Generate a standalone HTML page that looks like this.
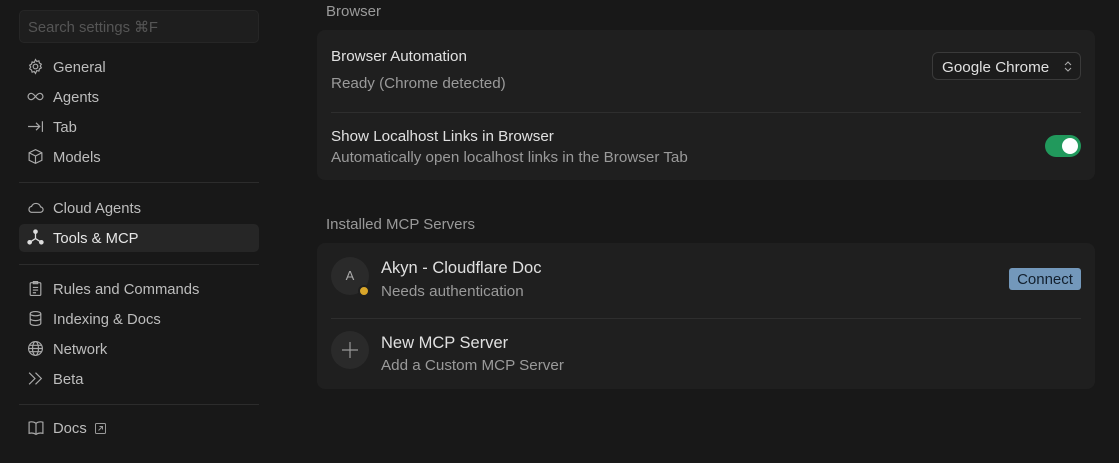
<!DOCTYPE html>
<html><head><style>
*{margin:0;padding:0;box-sizing:border-box}
body{width:1119px;height:463px;background:#181818;font-family:"Liberation Sans",sans-serif;font-size:14.8px;color:#d6d6d6;position:relative;overflow:hidden}
.a{position:absolute;white-space:nowrap}
.search{left:19px;top:10px;width:240px;height:33px;background:#1e1e1e;border:1px solid #262626;border-radius:5px;color:#555;padding:8px 8px;font-size:14.8px}
.it{left:19px;width:240px;height:28px;line-height:30px;padding-left:34px;color:#bdbdbd}
.it svg{position:absolute;left:8px;top:5px}
.sel{background:#262626;border-radius:5px;color:#e6e6e6}
.div{left:19px;width:240px;height:1px;background:#2c2c2c}
.card{left:317px;width:778px;background:#1f1f1f;border-radius:8px}
.h{color:#9a9a9a;font-size:15px}
.t{color:#e0e0e0;font-size:15.2px}
.s{color:#9a9a9a;font-size:15.2px}
</style></head><body>
<div class="a search">Search settings ⌘F</div>
<div class="a it" style="top:53px"><svg width="17" height="17" viewBox="0 0 16 16" fill="none" stroke="#aaa" stroke-width="1.1"><circle cx="8" cy="8" r="2.2"/><path d="M8 1.5l1.2 1.7 2-.5.5 2 1.8 1.1-1 1.7 1 1.7-1.8 1.1-.5 2-2-.5L8 14.5l-1.2-1.7-2 .5-.5-2-1.8-1.1 1-1.7-1-1.7 1.8-1.1.5-2 2 .5z"/></svg>General</div>
<div class="a it" style="top:83px"><svg width="17" height="17" viewBox="0 0 16 16" fill="none" stroke="#aaa" stroke-width="1.1"><path d="M8 8c-2-2.5-3-3-4.2-3S1 6.3 1 8s1.5 3 2.8 3S6 10.5 8 8s3-3 4.2-3S15 6.3 15 8s-1.5 3-2.8 3S10 10.5 8 8z"/></svg>Agents</div>
<div class="a it" style="top:113px"><svg width="17" height="17" viewBox="0 0 16 16" fill="none" stroke="#aaa" stroke-width="1.1"><path d="M1 8h11M8.5 4.5L12 8l-3.5 3.5M14.5 3v10"/></svg>Tab</div>
<div class="a it" style="top:143px"><svg width="17" height="17" viewBox="0 0 16 16" fill="none" stroke="#aaa" stroke-width="1.1"><path d="M8 1.5l6 3v7l-6 3-6-3v-7zM2 4.5l6 3 6-3M8 7.5v7"/></svg>Models</div>
<div class="a div" style="top:182px"></div>
<div class="a it" style="top:194px"><svg width="17" height="17" viewBox="0 0 16 16" fill="none" stroke="#aaa" stroke-width="1.1"><path d="M4 12.5h8.5a2.5 2.5 0 0 0 .3-5A4.5 4.5 0 0 0 4.3 7 2.8 2.8 0 0 0 4 12.5z"/></svg>Cloud Agents</div>
<div class="a it sel" style="top:224px"><svg width="17" height="17" viewBox="0 0 16 16" fill="#ddd" stroke="#ddd" stroke-width="1.2"><path d="M8 2v7M8 9l-5.5 3.5M8 9l5.5 3.5" fill="none"/><circle cx="8" cy="2.5" r="1.6"/><circle cx="2.5" cy="12.5" r="1.6"/><circle cx="13.5" cy="12.5" r="1.6"/></svg>Tools &amp; MCP</div>
<div class="a div" style="top:264px"></div>
<div class="a it" style="top:275px"><svg width="17" height="17" viewBox="0 0 16 16" fill="none" stroke="#aaa" stroke-width="1.1"><rect x="3" y="2.5" width="10" height="12" rx="1"/><path d="M6 1.5h4v2H6zM5.5 7h5M5.5 9.5h5M5.5 12h3"/></svg>Rules and Commands</div>
<div class="a it" style="top:305px"><svg width="17" height="17" viewBox="0 0 16 16" fill="none" stroke="#aaa" stroke-width="1.1"><ellipse cx="8" cy="3.5" rx="5" ry="2"/><path d="M3 3.5v9c0 1.1 2.2 2 5 2s5-.9 5-2v-9M3 8c0 1.1 2.2 2 5 2s5-.9 5-2"/></svg>Indexing &amp; Docs</div>
<div class="a it" style="top:335px"><svg width="17" height="17" viewBox="0 0 16 16" fill="none" stroke="#aaa" stroke-width="1.1"><circle cx="8" cy="8" r="6.5"/><ellipse cx="8" cy="8" rx="2.8" ry="6.5"/><path d="M1.5 8h13M2.5 5h11M2.5 11h11"/></svg>Network</div>
<div class="a it" style="top:365px"><svg width="17" height="17" viewBox="0 0 16 16" fill="none" stroke="#aaa" stroke-width="1.1"><path d="M2 2.5L7.5 8 2 13.5M8 2.5L13.5 8 8 13.5"/></svg>Beta</div>
<div class="a div" style="top:404px"></div>
<div class="a it" style="top:414px"><svg width="18" height="17" viewBox="0 0 16 16" fill="none" stroke="#aaa" stroke-width="1.1"><path d="M8 4c-2-1.5-4.5-1.5-6.5-1v10.5c2-.5 4.5-.5 6.5 1 2-1.5 4.5-1.5 6.5-1V3c-2-.5-4.5-.5-6.5 1zM8 4v10.5"/></svg>Docs <svg style="position:relative;left:4px;top:1px" width="11" height="11" viewBox="0 0 11 11" fill="none" stroke="#999" stroke-width="1"><rect x=".5" y=".5" width="10" height="10" rx="1"/><path d="M3.5 7.5l4-4M4.5 3.5h3v3"/></svg></div>

<div class="a h" style="left:326px;top:3px">Browser</div>
<div class="a card" style="top:30px;height:150px"></div>
<div class="a t" style="left:331px;top:48px">Browser Automation</div>
<div class="a s" style="left:331px;top:75px">Ready (Chrome detected)</div>
<div class="a" style="left:932px;top:52px;width:149px;height:28px;border:1px solid #3a3a3a;border-radius:6px;background:#1c1c1c;color:#e0e0e0;padding:6px 0 0 9px;font-size:15.2px">Google Chrome<svg style="position:absolute;right:7px;top:7px" width="10" height="13" viewBox="0 0 10 13" fill="none" stroke="#aaa" stroke-width="1.1"><path d="M2 5l3-3 3 3M2 8l3 3 3-3"/></svg></div>
<div class="a" style="left:331px;top:112px;width:750px;height:1px;background:#2e2e2e"></div>
<div class="a t" style="left:331px;top:128px">Show Localhost Links in Browser</div>
<div class="a s" style="left:331px;top:149px">Automatically open localhost links in the Browser Tab</div>
<div class="a" style="left:1045px;top:135px;width:36px;height:22px;border-radius:11px;background:#21995c"><div style="position:absolute;right:3px;top:3px;width:16px;height:16px;border-radius:50%;background:#fff"></div></div>

<div class="a h" style="left:326px;top:216px">Installed MCP Servers</div>
<div class="a card" style="top:243px;height:146px"></div>
<div class="a" style="left:331px;top:257px;width:38px;height:38px;border-radius:50%;background:#2a2a2a;color:#aaa;font-size:13px;text-align:center;line-height:38px">A</div>
<div class="a" style="left:358px;top:285px;width:12px;height:12px;border-radius:50%;background:#d9a62a;border:2px solid #1f1f1f"></div>
<div class="a t" style="left:381px;top:259px;font-size:16.5px">Akyn - Cloudflare Doc</div>
<div class="a s" style="left:381px;top:283px">Needs authentication</div>
<div class="a" style="left:1009px;top:268px;width:72px;height:22px;border-radius:3px;background:#7398bb;color:#13202e;text-align:center;line-height:23px;font-size:15px">Connect</div>
<div class="a" style="left:331px;top:318px;width:750px;height:1px;background:#2e2e2e"></div>
<div class="a" style="left:331px;top:331px;width:38px;height:38px;border-radius:50%;background:#2a2a2a"><svg style="position:absolute;left:11px;top:11px" width="16" height="16" viewBox="0 0 16 16" stroke="#999" stroke-width="1.2"><path d="M8 0v16M0 8h16"/></svg></div>
<div class="a t" style="left:381px;top:334px;font-size:16.5px">New MCP Server</div>
<div class="a s" style="left:381px;top:357px">Add a Custom MCP Server</div>
</body></html>
